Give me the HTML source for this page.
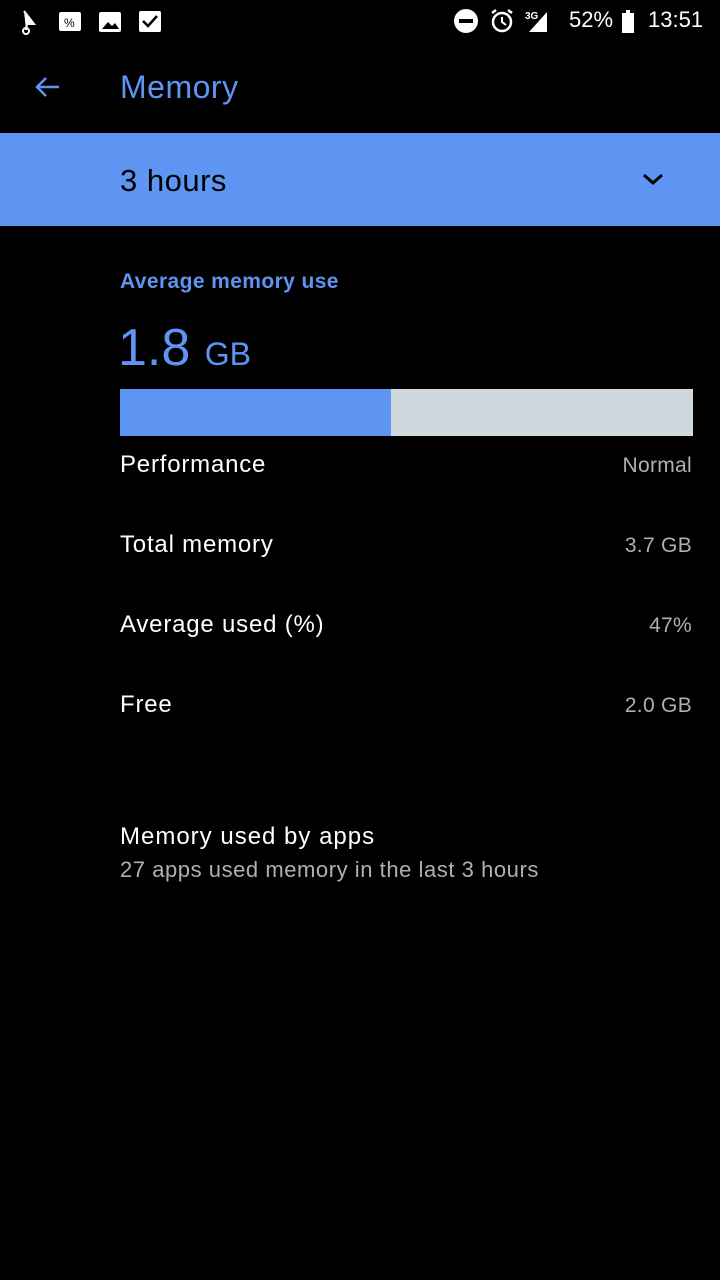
<!DOCTYPE html>
<html><head><meta charset="utf-8"><style>
body{margin:0;width:720px;height:1280px;background:#000;font-family:"Liberation Sans",sans-serif;position:relative;overflow:hidden;color:#fff}
.a{position:absolute;white-space:nowrap}
.r{right:28px;color:#b0b0b0;font-size:21px;letter-spacing:0.3px}
.l{left:120px;font-size:24px;letter-spacing:0.8px}
</style></head><body>
<!-- status bar -->
<svg class="a" style="left:18px;top:6px" width="150" height="30" viewBox="0 0 150 30">
<path d="M6 5 L16 18 L9 18 L8 24" fill="#fff" stroke="#fff" stroke-width="2"/><circle cx="8" cy="25" r="3" fill="none" stroke="#fff" stroke-width="2"/>
<rect x="41" y="6" width="22" height="19" rx="2" fill="#fff"/><text x="46" y="21" font-size="12" fill="#000">%</text>
<rect x="81" y="6" width="22" height="20" rx="2" fill="#fff"/><path d="M84 23 L90 16 L94 20 L97 17 L101 23Z" fill="#000"/>
<rect x="121" y="5" width="22" height="21" rx="2" fill="#fff"/><path d="M125 15 L130 20 L139 10" stroke="#000" stroke-width="2.5" fill="none"/>
</svg>
<svg class="a" style="left:450px;top:6px" width="190" height="30" viewBox="0 0 190 30">
<circle cx="16" cy="15" r="12" fill="#fff"/><rect x="9" y="13" width="14" height="4" fill="#000"/>
<circle cx="52" cy="16" r="9" fill="none" stroke="#fff" stroke-width="2.5"/><path d="M52 11 V16 L56 19" stroke="#fff" stroke-width="2" fill="none"/><path d="M42 7 L46 4 M62 7 L58 4" stroke="#fff" stroke-width="2.5"/>
<text x="75" y="13" font-size="10" fill="#fff" font-weight="bold">3G</text><path d="M79 26 L97 26 L97 6Z" fill="#fff"/>
<rect x="172" y="7" width="12" height="20" fill="#fff"/><rect x="176" y="4" width="4" height="3" fill="#fff"/>
</svg>
<div class="a" style="left:569px;top:7px;font-size:22px">52%</div>
<div class="a" style="left:648px;top:7px;font-size:22px">13:51</div>
<!-- toolbar -->
<svg class="a" style="left:32px;top:72px" width="30" height="30" viewBox="0 0 30 30"><path d="M27 15 H5 M14 6 L5 15 L14 24" stroke="#5e95f2" stroke-width="2.5" fill="none"/></svg>
<div class="a" style="left:120px;top:69px;font-size:32px;color:#5e95f2;letter-spacing:0.5px">Memory</div>
<div class="a" style="left:0;top:133px;width:720px;height:93px;background:#5e95f2"></div>
<div class="a" style="left:120px;top:163px;font-size:31px;color:#000;letter-spacing:0.5px">3 hours</div>
<svg class="a" style="left:641px;top:170px" width="24" height="18" viewBox="0 0 24 18"><path d="M3 5 L12 13 L21 5" stroke="#000" stroke-width="3" fill="none"/></svg>
<div class="a" style="left:120px;top:270px;font-size:21px;color:#5e95f2;font-weight:bold;letter-spacing:0.4px">Average memory use</div>
<div class="a" style="left:118px;top:318px;font-size:52px;color:#5e95f2">1.8 <span style="font-size:32px">GB</span></div>
<div class="a" style="left:120px;top:389px;width:271px;height:47px;background:#5e95f2"></div>
<div class="a" style="left:391px;top:389px;width:302px;height:47px;background:#cfd8dc"></div>
<div class="a l" style="top:451px">Performance</div><div class="a r" style="top:454px">Normal</div>
<div class="a l" style="top:531px">Total memory</div><div class="a r" style="top:534px">3.7 GB</div>
<div class="a l" style="top:611px">Average used (%)</div><div class="a r" style="top:614px">47%</div>
<div class="a l" style="top:691px">Free</div><div class="a r" style="top:694px">2.0 GB</div>
<div class="a l" style="top:823px;letter-spacing:1px">Memory used by apps</div>
<div class="a" style="left:120px;top:857px;font-size:22px;color:#b0b0b0;letter-spacing:0.55px">27 apps used memory in the last 3 hours</div>
</body></html>
